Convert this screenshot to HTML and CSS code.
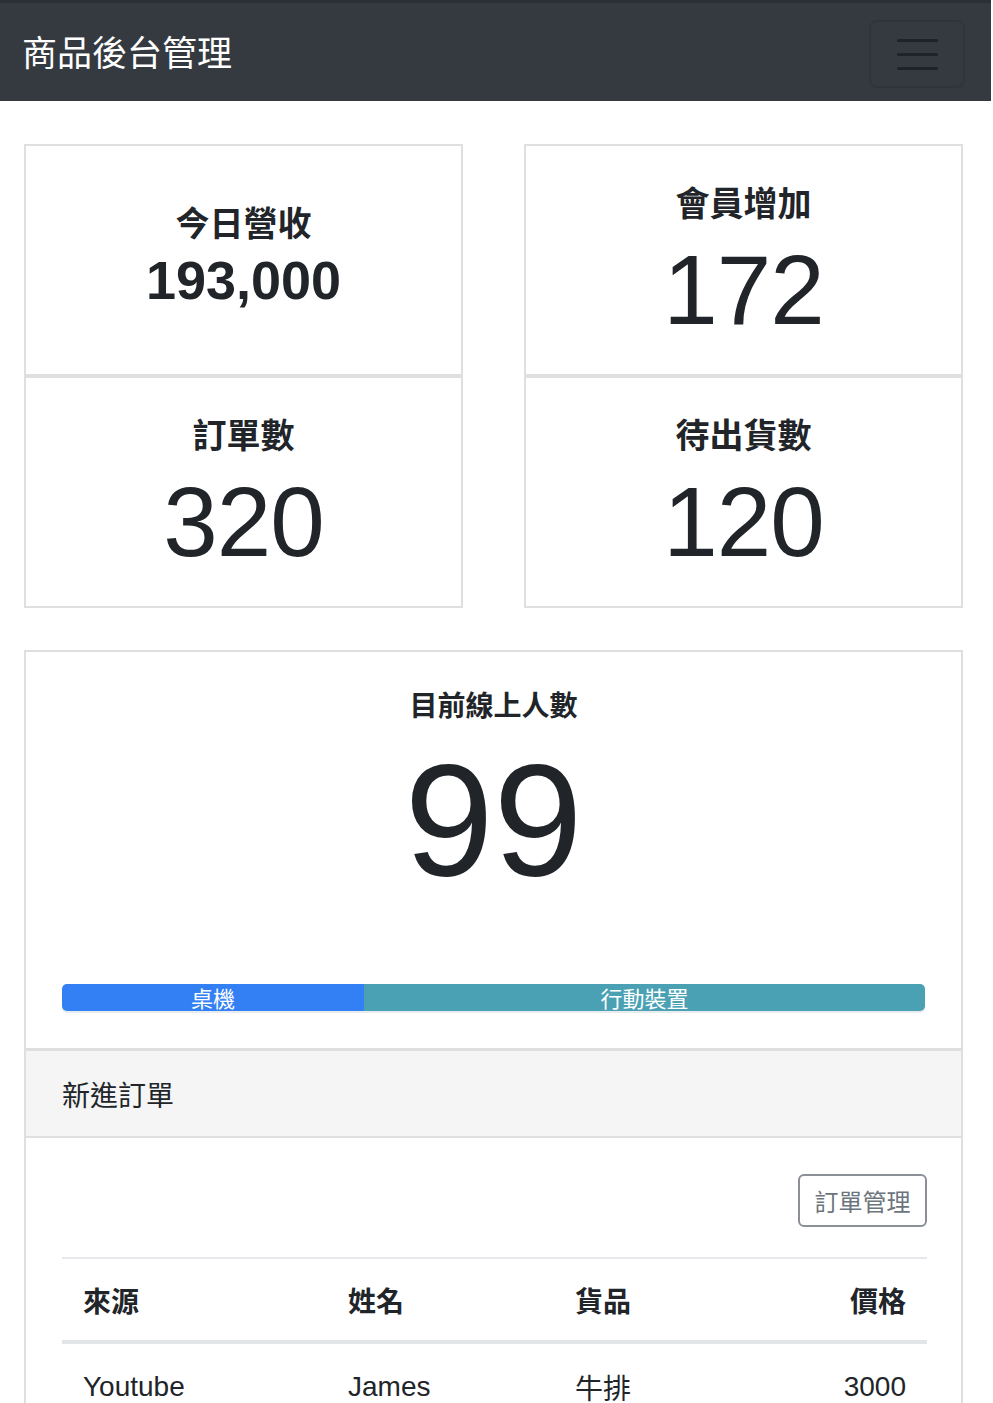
FILE: index.html
```html
<!DOCTYPE html>
<html lang="zh-Hant">
<head>
<meta charset="utf-8">
<title>商品後台管理</title>
<link rel="stylesheet" href="styles.css">
</head>
<body>
<nav class="navbar">
  <div class="brand">商品後台管理</div>
  <button class="toggler" aria-label="menu">
    <span class="bar"></span><span class="bar"></span><span class="bar"></span>
  </button>
</nav>
<main class="container">
  <section class="stats">
    <div class="col">
      <div class="stat stat-a">
        <div class="stat-title">今日營收</div>
        <div class="stat-num-sm">193,000</div>
      </div>
      <div class="stat stat-b">
        <div class="stat-title">訂單數</div>
        <div class="stat-num">320</div>
      </div>
    </div>
    <div class="col">
      <div class="stat stat-b">
        <div class="stat-title">會員增加</div>
        <div class="stat-num">172</div>
      </div>
      <div class="stat stat-b">
        <div class="stat-title">待出貨數</div>
        <div class="stat-num">120</div>
      </div>
    </div>
  </section>

  <section class="card">
    <div class="card-body online">
      <div class="online-title">目前線上人數</div>
      <div class="online-num">99</div>
      <div class="progress">
        <div class="seg seg-desk" style="width:35%">桌機</div>
        <div class="seg seg-mobile" style="width:65%">行動裝置</div>
      </div>
    </div>
    <div class="card-header">新進訂單</div>
    <div class="card-body orders">
      <div class="btn-row"><button class="btn">訂單管理</button></div>
      <table class="table">
        <colgroup>
          <col class="c1"><col class="c2"><col class="c3"><col class="c4">
        </colgroup>
        <thead>
          <tr><th>來源</th><th>姓名</th><th>貨品</th><th class="right">價格</th></tr>
        </thead>
        <tbody>
          <tr><td>Youtube</td><td>James</td><td>牛排</td><td class="right">3000</td></tr>
        </tbody>
      </table>
    </div>
  </section>
</main>
</body>
</html>
```

FILE: styles.css
```css
* { box-sizing: border-box; }

body {
  margin: 0;
  width: 991px;
  font-family: "Liberation Sans", "Noto Sans CJK TC", sans-serif;
  color: #212529;
  background: #fff;
  overflow: hidden;
}

.navbar {
  height: 101px;
  background: #343a40;
  border-top: 3px solid #2c3035;
  display: flex;
  align-items: center;
  justify-content: space-between;
  padding: 0 26px 0 22px;
}

.brand {
  color: #fff;
  font-size: 35px;
  line-height: 44px;
  font-family: "Noto Sans CJK TC", sans-serif;
  margin-top: -2px;
}

.toggler {
  width: 96px;
  height: 68px;
  margin-top: 4px;
  background: transparent;
  border: 2px solid #30353a;
  border-radius: 8px;
  display: flex;
  flex-direction: column;
  align-items: center;
  justify-content: center;
  gap: 11px;
  padding: 0;
}

.toggler .bar {
  display: block;
  width: 41px;
  height: 3px;
  border-radius: 2px;
  background: #1f2327;
}

.container {
  padding: 43px 0 0 24px;
  width: 963px;
}

.stats {
  display: flex;
  gap: 61px;
}

.col {
  width: 439px;
  display: flex;
  flex-direction: column;
}

.stat {
  height: 232px;
  border: 2px solid #dfdfdf;
  display: flex;
  flex-direction: column;
  align-items: center;
  text-align: center;
}

.stat-a { padding-top: 56px; }
.stat-b { padding-top: 36px; }

.stat-title {
  font-family: "Noto Sans CJK TC", sans-serif;
  font-weight: 700;
  font-size: 34px;
  line-height: 40px;
}

.stat-num-sm {
  font-weight: 700;
  font-size: 54px;
  line-height: 76px;
}

.stat-num {
  font-size: 98px;
  line-height: 136px;
  letter-spacing: -1px;
}

.card {
  margin-top: 42px;
  width: 939px;
  border: 2px solid #dfdfdf;
  border-bottom: none;
}

.card-body.online {
  padding: 35px 36px 35px;
  display: flex;
  flex-direction: column;
  align-items: center;
}

.online-title {
  font-family: "Noto Sans CJK TC", sans-serif;
  font-weight: 700;
  font-size: 28px;
  line-height: 34px;
}

.online-num {
  font-size: 160px;
  line-height: 170px;
  margin-top: 14px;
}

.progress {
  margin-top: 79px;
  width: 100%;
  height: 29px;
  display: flex;
  background: #e9ecef;
  border-radius: 5px;
  align-items: flex-start;
}

.seg {
  height: 27px;
  color: #fff;
  font-family: "Noto Sans CJK TC", sans-serif;
  font-size: 22px;
  line-height: 27px;
  text-align: center;
  white-space: nowrap;
}

.seg-desk { background: #3380f5; border-radius: 5px 0 0 5px; }
.seg-mobile { background: #4aa1b4; border-radius: 0 5px 5px 0; }

.card-header {
  background: #f5f5f5;
  border-top: 3px solid #dfdfdf;
  border-bottom: 2px solid #dfdfdf;
  height: 90px;
  padding: 0 36px;
  display: flex;
  align-items: center;
  font-family: "Noto Sans CJK TC", sans-serif;
  font-size: 28px;
}

.card-body.orders {
  padding: 36px 34px 0 36px;
}

.btn-row {
  display: flex;
  justify-content: flex-end;
}

.btn {
  width: 129px;
  height: 53px;
  border: 2px solid #8a9096;
  border-radius: 6px;
  background: #fff;
  color: #6c757d;
  font-family: "Noto Sans CJK TC", sans-serif;
  font-size: 24px;
  padding: 0;
}

.table {
  margin-top: 30px;
  width: 865px;
  border-collapse: collapse;
  table-layout: fixed;
  font-size: 28px;
}

.table col.c1 { width: 265px; }
.table col.c2 { width: 227px; }
.table col.c3 { width: 243px; }
.table col.c4 { width: 130px; }

.table th, .table td {
  text-align: left;
  padding: 0 21px;
  height: 84px;
  border-top: 2px solid #e6e8eb;
  vertical-align: middle;
  white-space: nowrap;
}

.table th {
  font-family: "Noto Sans CJK TC", sans-serif;
  font-weight: 700;
  border-bottom: 4px solid #e3e6e9;
}

.table td { height: 88px; border-top: none; }

.table .right { text-align: right; }
```
